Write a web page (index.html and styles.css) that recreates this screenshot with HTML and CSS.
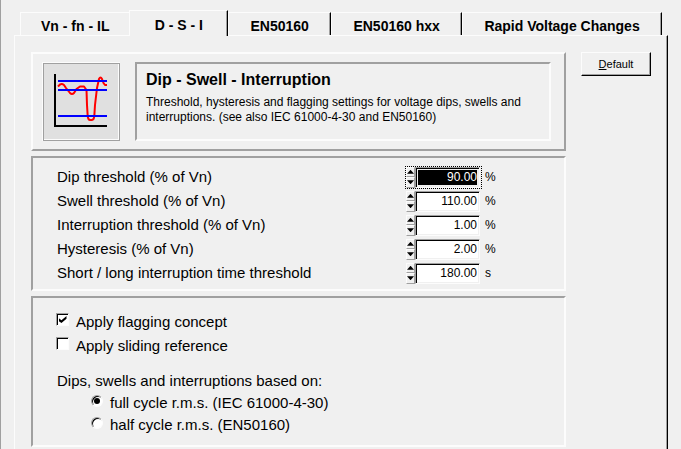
FILE: index.html
```html
<!DOCTYPE html>
<html lang="en">
<head>
    <meta charset="UTF-8">
    <meta name="viewport" content="width=device-width, initial-scale=1.0">
    <title>Dip - Swell - Interruption</title>
    <link rel="stylesheet" href="styles.css">
</head>
<body>
    <div class="window">
        <nav class="tabs">
            <button class="tab">Vn - fn - IL</button>
            <button class="tab active">D - S - I</button>
            <button class="tab">EN50160</button>
            <button class="tab">EN50160 hxx</button>
            <button class="tab">Rapid Voltage Changes</button>
        </nav>

        <form class="page">
            <div class="settings">
                <div class="panel raised header">
                    <div class="icon-box">
                        <svg viewBox="0 0 78 79" width="78" height="79" fill="none" stroke-width="2">
                            <path stroke="#f00" stroke-linejoin="round" d="M16 24.5L18 22.5Q20 21.500 22 23L24 26L28 31Q30 33 32 31L34.500 27L38 24.500H42L44.500 28L45 43L45.700 54Q46 58 48 58H50Q52 58 52.300 54L53 43L55 26L57 17Q58.500 14 60 17L61.500 21L63 23H65"/>
                            <path stroke="#00f" d="M16 19H65M16 28H65M16 54H65"/>
                            <path stroke="#000" d="M13 12V64H65"/>
                        </svg>
                    </div>
                    <div class="intro">
                        <h1>Dip - Swell - Interruption</h1>
                        <p>Threshold, hysteresis and flagging settings for voltage dips, swells and interruptions. (see also IEC 61000-4-30 and EN50160)</p>
                    </div>
                </div>

                <div class="panel thresholds">
                    <div class="row">
                        <label for="dip">Dip threshold (% of Vn)</label>
                        <div class="spinner focused">
                            <div class="arrows">
                                <button type="button" class="up" aria-label="Increase"></button>
                                <button type="button" class="down" aria-label="Decrease"></button>
                            </div>
                            <input type="text" id="dip" value="90.00">
                        </div>
                        <span class="unit">%</span>
                    </div>
                    <div class="row">
                        <label for="swell">Swell threshold (% of Vn)</label>
                        <div class="spinner">
                            <div class="arrows">
                                <button type="button" class="up" aria-label="Increase"></button>
                                <button type="button" class="down" aria-label="Decrease"></button>
                            </div>
                            <input type="text" id="swell" value="110.00">
                        </div>
                        <span class="unit">%</span>
                    </div>
                    <div class="row">
                        <label for="interruption">Interruption threshold (% of Vn)</label>
                        <div class="spinner">
                            <div class="arrows">
                                <button type="button" class="up" aria-label="Increase"></button>
                                <button type="button" class="down" aria-label="Decrease"></button>
                            </div>
                            <input type="text" id="interruption" value="1.00">
                        </div>
                        <span class="unit">%</span>
                    </div>
                    <div class="row">
                        <label for="hysteresis">Hysteresis (% of Vn)</label>
                        <div class="spinner">
                            <div class="arrows">
                                <button type="button" class="up" aria-label="Increase"></button>
                                <button type="button" class="down" aria-label="Decrease"></button>
                            </div>
                            <input type="text" id="hysteresis" value="2.00">
                        </div>
                        <span class="unit">%</span>
                    </div>
                    <div class="row">
                        <label for="time">Short / long interruption time threshold</label>
                        <div class="spinner">
                            <div class="arrows">
                                <button type="button" class="up" aria-label="Increase"></button>
                                <button type="button" class="down" aria-label="Decrease"></button>
                            </div>
                            <input type="text" id="time" value="180.00">
                        </div>
                        <span class="unit">s</span>
                    </div>
                </div>

                <div class="panel options">
                    <div class="check">
                        <input type="checkbox" id="flagging" checked>
                        <label for="flagging">Apply flagging concept</label>
                    </div>
                    <div class="check">
                        <input type="checkbox" id="sliding">
                        <label for="sliding">Apply sliding reference</label>
                    </div>
                    <fieldset>
                        <legend>Dips, swells and interruptions based on:</legend>
                        <div class="radio">
                            <input type="radio" name="cycle" id="full" checked>
                            <label for="full">full cycle r.m.s. (IEC 61000-4-30)</label>
                        </div>
                        <div class="radio">
                            <input type="radio" name="cycle" id="half">
                            <label for="half">half cycle r.m.s. (EN50160)</label>
                        </div>
                    </fieldset>
                </div>
            </div>

            <button type="reset" class="default-btn"><u>D</u>efault</button>
        </form>
    </div>
</body>
</html>
```
FILE: styles.css
```css
* {
    box-sizing: border-box;
}
body {
    margin: 0;
    background-color: #f0f0f0;
    color: #000;
    font-family: "Liberation Sans", Arial, sans-serif;
    font-size: 15px;
}
button, input {
    font-family: inherit;
    color: inherit;
}
.window {
    display: flex;
    flex-direction: column;
    min-height: 100vh;
    padding: 10px 13px 0;
    border-left: 1px solid #a0a0a0;
}

/* Tabs */
.tabs {
    display: flex;
    align-items: flex-end;
    height: 25px;
    padding: 0 6px;
}
.tab {
    flex-grow: 1;
    height: 23px;
    padding: 3px 20px 0;
    border: 1px solid #fcfcfc;
    border-bottom: none;
    border-right: 1px solid #000;
    box-shadow: inset -1px 0 #a0a0a0;
    background-color: #f0f0f0;
    font-size: 14px;
    font-weight: bold;
    white-space: nowrap;
}
.tab:first-child {
    flex-grow: 0;
    border-right: none;
    box-shadow: none;
}
.tab.active {
    z-index: 1;
    height: 26px;
    margin-bottom: -1px;
    padding: 3px 23px 1px;
}
.page {
    display: flex;
    flex: 1;
    align-items: flex-start;
    gap: 15px;
    padding: 16px 16px 2px;
    border-top: 1px solid #fcfcfc;
    border-left: 1px solid #fcfcfc;
    border-right: 1px solid #000;
    box-shadow: inset -1px 0 #a0a0a0;
}

/* Panels */
.settings {
    display: flex;
    flex: 1;
    flex-direction: column;
    gap: 5px;
}
.panel {
    border: 2px solid;
    border-color: #a0a0a0 #fcfcfc #fcfcfc #a0a0a0;
}
.panel.raised {
    border-color: #fcfcfc #a0a0a0 #a0a0a0 #fcfcfc;
}
.header {
    display: flex;
    gap: 15px;
    padding: 8px 13px 8px 9px;
}
.icon-box {
    width: 78px;
    height: 79px;
    background-color: #e0e0e0;
    box-shadow: inset 1px 1px #fcfcfc, inset -1px -1px #a0a0a0, inset 2px 2px #a0a0a0, inset -2px -2px #fcfcfc;
}
.icon-box svg {
    display: block;
}
.intro {
    flex: 1;
    padding: 7px 9px;
    border: 2px solid;
    border-color: #a0a0a0 #fcfcfc #fcfcfc #a0a0a0;
}
h1 {
    margin: 0 0 6px;
    font-size: 16px;
    line-height: 18px;
}
p {
    margin: 0;
    font-size: 12px;
    line-height: 15px;
}

/* Threshold fields */
.thresholds {
    padding: 7px 24px 4px;
}
.row {
    display: grid;
    grid-template-columns: 348px auto 1fr;
    align-items: center;
    height: 24px;
}
.row label {
    padding-bottom: 2px;
}
.spinner {
    display: flex;
    width: 77px;
    height: 23px;
    border: 1px dotted transparent;
}
.spinner.focused {
    border-color: #000;
}
.arrows {
    display: flex;
    flex-direction: column;
    width: 9px;
}
.arrows button {
    display: flex;
    flex: 1;
    align-items: center;
    justify-content: center;
    padding: 0;
    border: 1px solid;
    border-color: #fcfcfc #a0a0a0 #a0a0a0 #fcfcfc;
    background-color: #f0f0f0;
}
.arrows button::before {
    content: "";
    flex-shrink: 0;
    width: 7px;
    height: 4px;
    background-color: #000;
    clip-path: polygon(50% 0, 100% 100%, 0 100%);
}
.arrows .down::before {
    clip-path: polygon(0 0, 100% 0, 50% 100%);
}
.spinner input {
    width: 65px;
    height: 21px;
    padding: 2px;
    border: 1px solid;
    border-color: #a0a0a0 #fcfcfc #fcfcfc #a0a0a0;
    outline: none;
    background-color: #fff;
    box-shadow: inset 1px 1px #000, inset -1px -1px #f0f0f0;
    font-size: 12px;
    text-align: right;
}
.spinner.focused input {
    background: linear-gradient(#000, #000) content-box #fff;
    color: #fff;
}
.unit {
    padding-left: 3px;
    font-size: 12px;
}

/* Options */
.options {
    padding: 12px 23px 9px;
}
.check, .radio {
    display: flex;
    align-items: center;
    gap: 7px;
}
.check {
    height: 24px;
}
.radio {
    height: 22px;
    padding-left: 35px;
}
.check label, .radio label {
    padding-bottom: 2px;
}
.check input, .radio input {
    display: flex;
    align-items: center;
    justify-content: center;
    width: 13px;
    height: 13px;
    margin: 0 0 5px;
    border: 1px solid;
    border-color: #a0a0a0 #fcfcfc #fcfcfc #a0a0a0;
    background-color: #fff;
    box-shadow: inset 1px 1px #000;
    appearance: none;
}
.check input:checked::before {
    content: "";
    width: 8px;
    height: 7px;
    background-color: #000;
    clip-path: polygon(0 28%, 37% 60%, 100% 0, 100% 40%, 37% 100%, 0 70%);
}
.radio input {
    width: 12px;
    height: 12px;
    border-radius: 50%;
}
.radio input:checked::before {
    content: "";
    width: 6px;
    height: 6px;
    border-radius: 50%;
    background-color: #000;
}
fieldset {
    margin: 12px 0 0;
    padding: 0;
    border: none;
}
legend {
    padding: 0 0 0 1px;
    line-height: 22px;
}

.default-btn {
    width: 70px;
    height: 24px;
    padding: 0;
    border: 1px solid;
    border-color: #fcfcfc #000 #000 #fcfcfc;
    background-color: #f0f0f0;
    box-shadow: inset -1px -1px #a0a0a0;
    font-size: 11px;
}
```
